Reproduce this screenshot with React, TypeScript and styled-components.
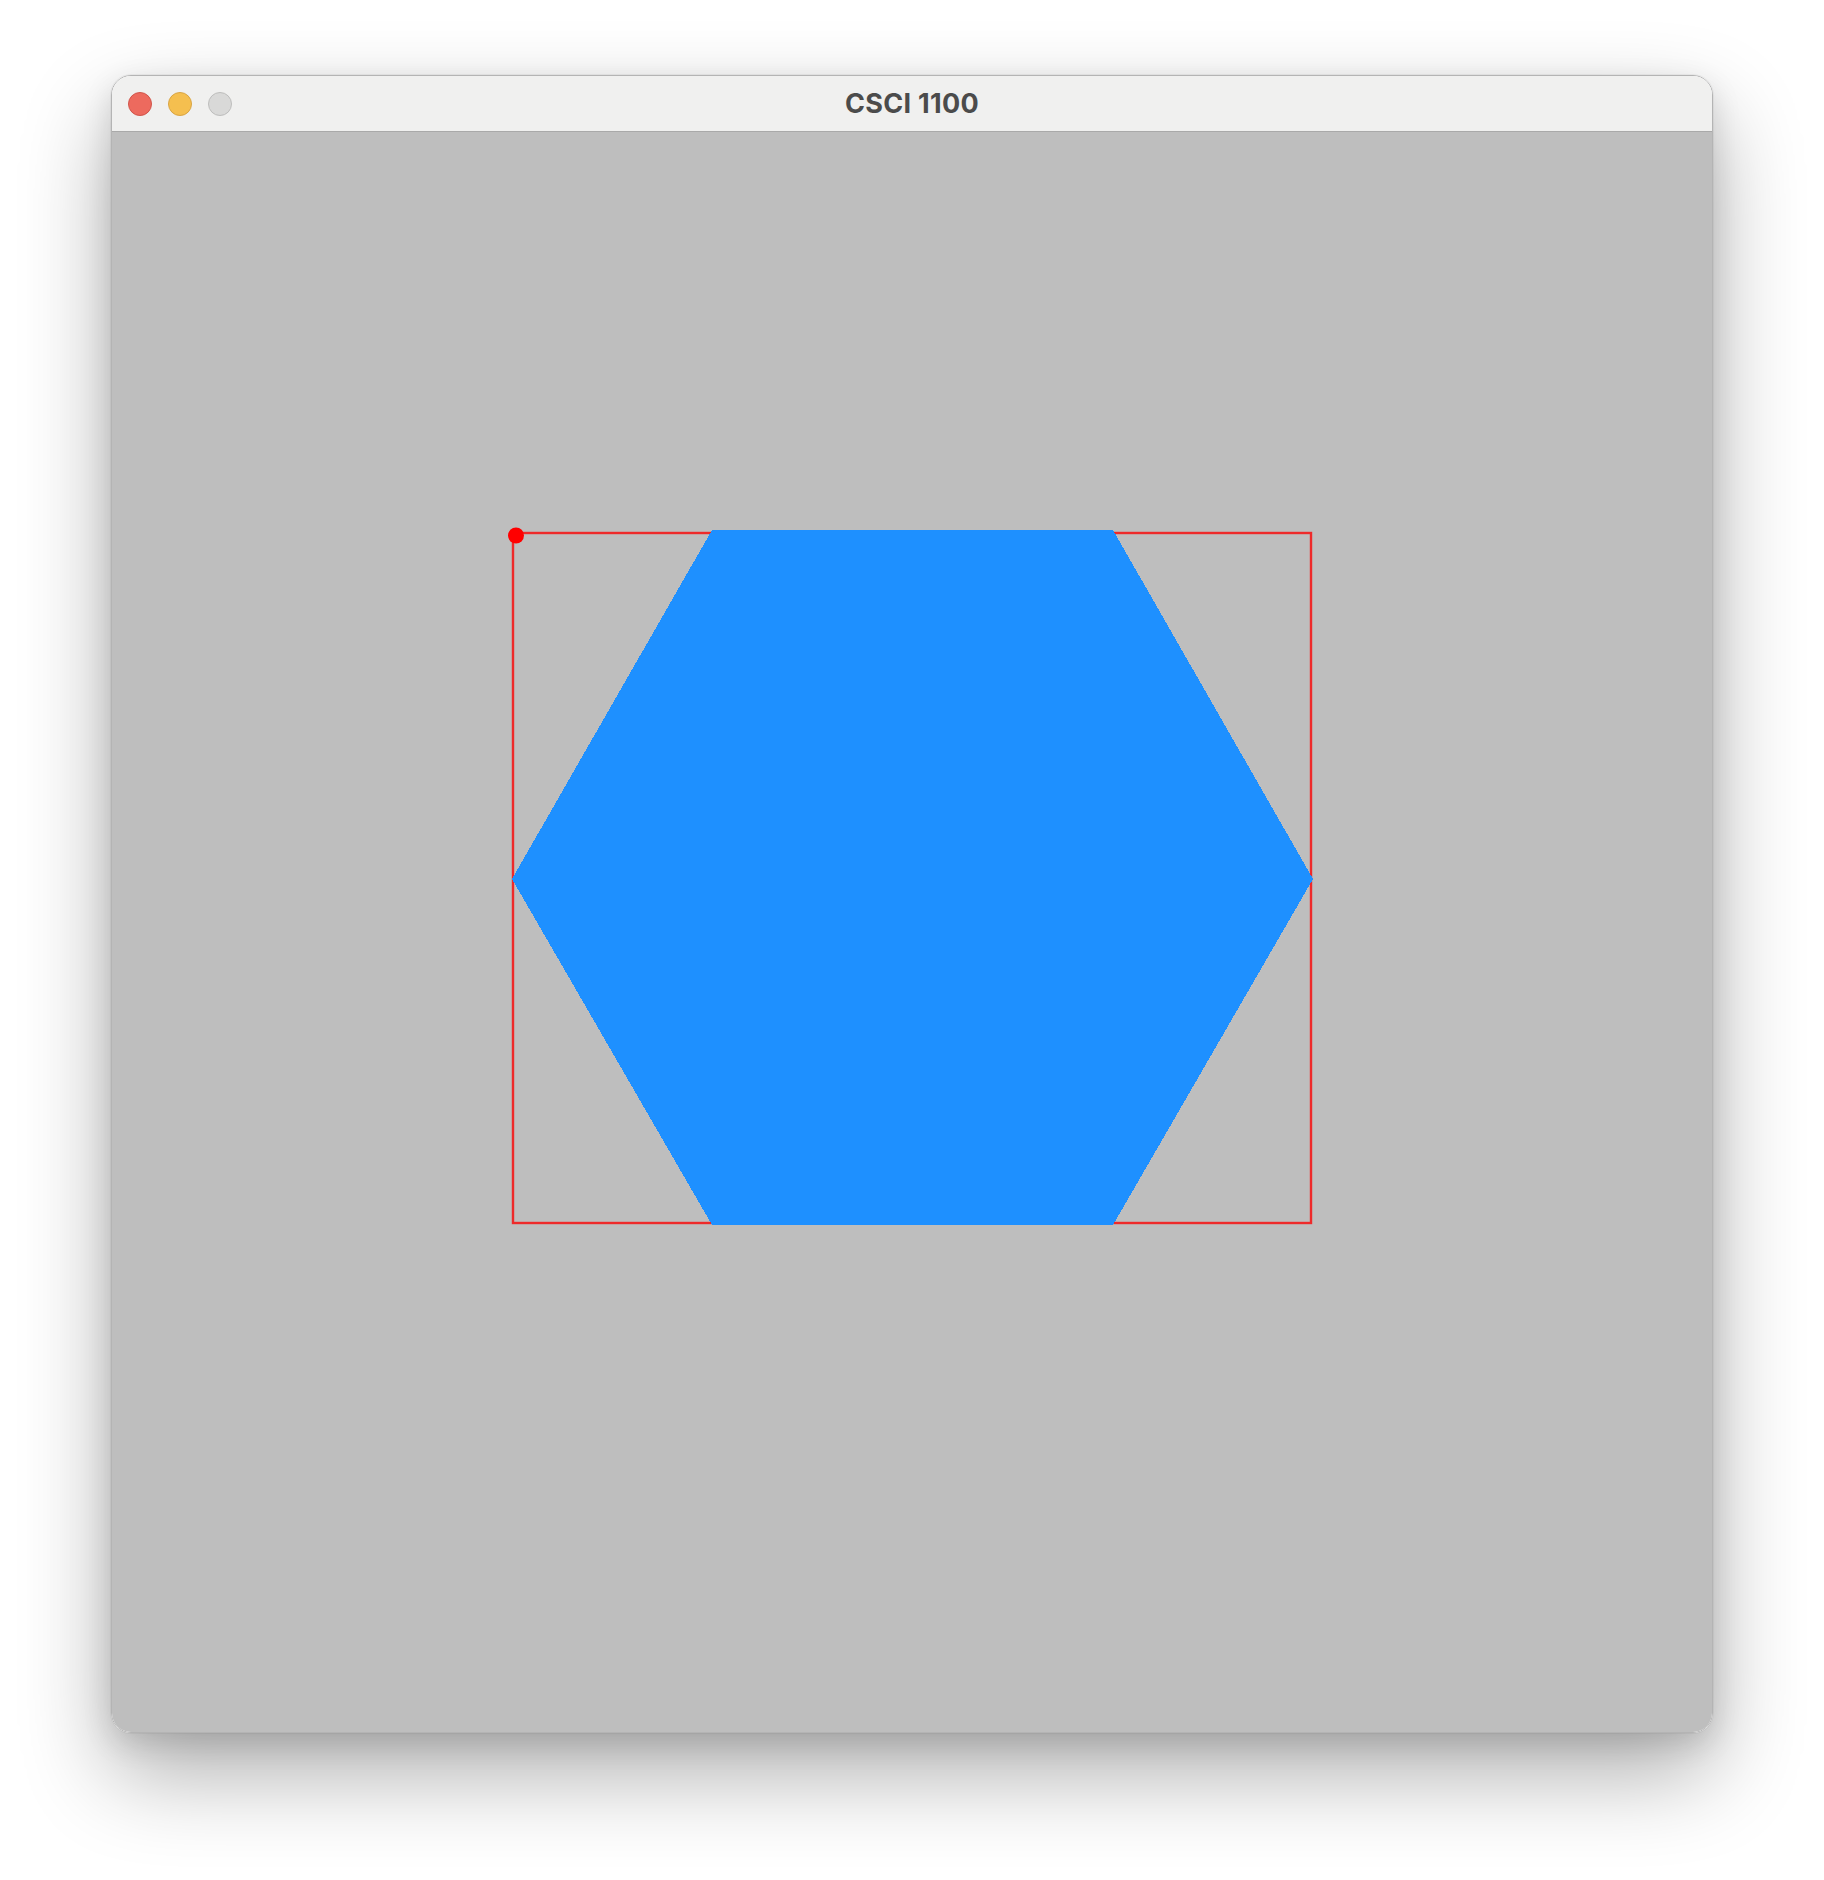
import React from "react";
import styled, { createGlobalStyle } from "styled-components";

const Global = createGlobalStyle`
  html, body {
    margin: 0;
    padding: 0;
    background: #ffffff;
  }
  body {
    font-family: Inter, "Liberation Sans", Arial, sans-serif;
  }
`;

const Page = styled.div`
  width: 1824px;
  height: 1880px;
  box-sizing: border-box;
  padding: 75px 0 0 111px;
  background: #ffffff;
`;

const Window = styled.div`
  width: 1602px;
  height: 1658px;
  box-sizing: border-box;
  border: 1px solid #b4b4b4;
  border-radius: 20px;
  overflow: hidden;
  display: flex;
  flex-direction: column;
  box-shadow: 0 0 0 1px rgba(0, 0, 0, 0.04), 0 40px 90px rgba(0, 0, 0, 0.32),
    0 10px 30px rgba(0, 0, 0, 0.12);
`;

const TitleBar = styled.div`
  height: 56px;
  flex: 0 0 56px;
  box-sizing: border-box;
  border-bottom: 1px solid #a9a9a9;
  background: #f0f0ef;
  display: grid;
  grid-template-columns: 1fr auto 1fr;
  align-items: center;
  padding: 0 16px;
`;

const Lights = styled.div`
  display: flex;
  gap: 16px;
  align-items: center;
`;

const Light = styled.span<{ $fill: string; $edge: string }>`
  width: 24px;
  height: 24px;
  border-radius: 50%;
  box-sizing: border-box;
  background: ${(p) => p.$fill};
  border: 1px solid ${(p) => p.$edge};
`;

const Title = styled.div`
  font-family: Inter, "Liberation Sans", Arial, sans-serif;
  font-weight: 700;
  font-size: 27px;
  color: #4b4b4b;
  letter-spacing: 0.3px;
  margin-top: -1px;
`;

const Canvas = styled.div`
  flex: 1;
  background: #bebebe;
  display: flex;
`;

const Drawing = styled.svg`
  display: block;
  width: 1600px;
  height: 1600px;
`;

const hex = [
  [1201, 747],
  [1001, 398],
  [600, 398],
  [400, 747],
  [600, 1093],
  [1001, 1093],
]
  .map(([x, y]) => `${x},${y}`)
  .join(" ");

export default function App() {
  return (
    <Page>
      <Global />
      <Window>
        <TitleBar>
          <Lights>
            <Light $fill="#ed6a5e" $edge="#d0554b" />
            <Light $fill="#f5bf4f" $edge="#d8a444" />
            <Light $fill="#d9d9d8" $edge="#bdbdbc" />
          </Lights>
          <Title>CSCI 1100</Title>
          <div />
        </TitleBar>
        <Canvas>
          <Drawing viewBox="0 0 1600 1600">
            <rect x={401} y={401} width={798} height={690} fill="none" stroke="#ee2a2a" strokeWidth={2.4} />
            <polygon points={hex} fill="#1e90ff" shapeRendering="crispEdges" />
            <circle cx={404} cy={403.5} r={8} fill="#ff0000" />
          </Drawing>
        </Canvas>
      </Window>
    </Page>
  );
}
